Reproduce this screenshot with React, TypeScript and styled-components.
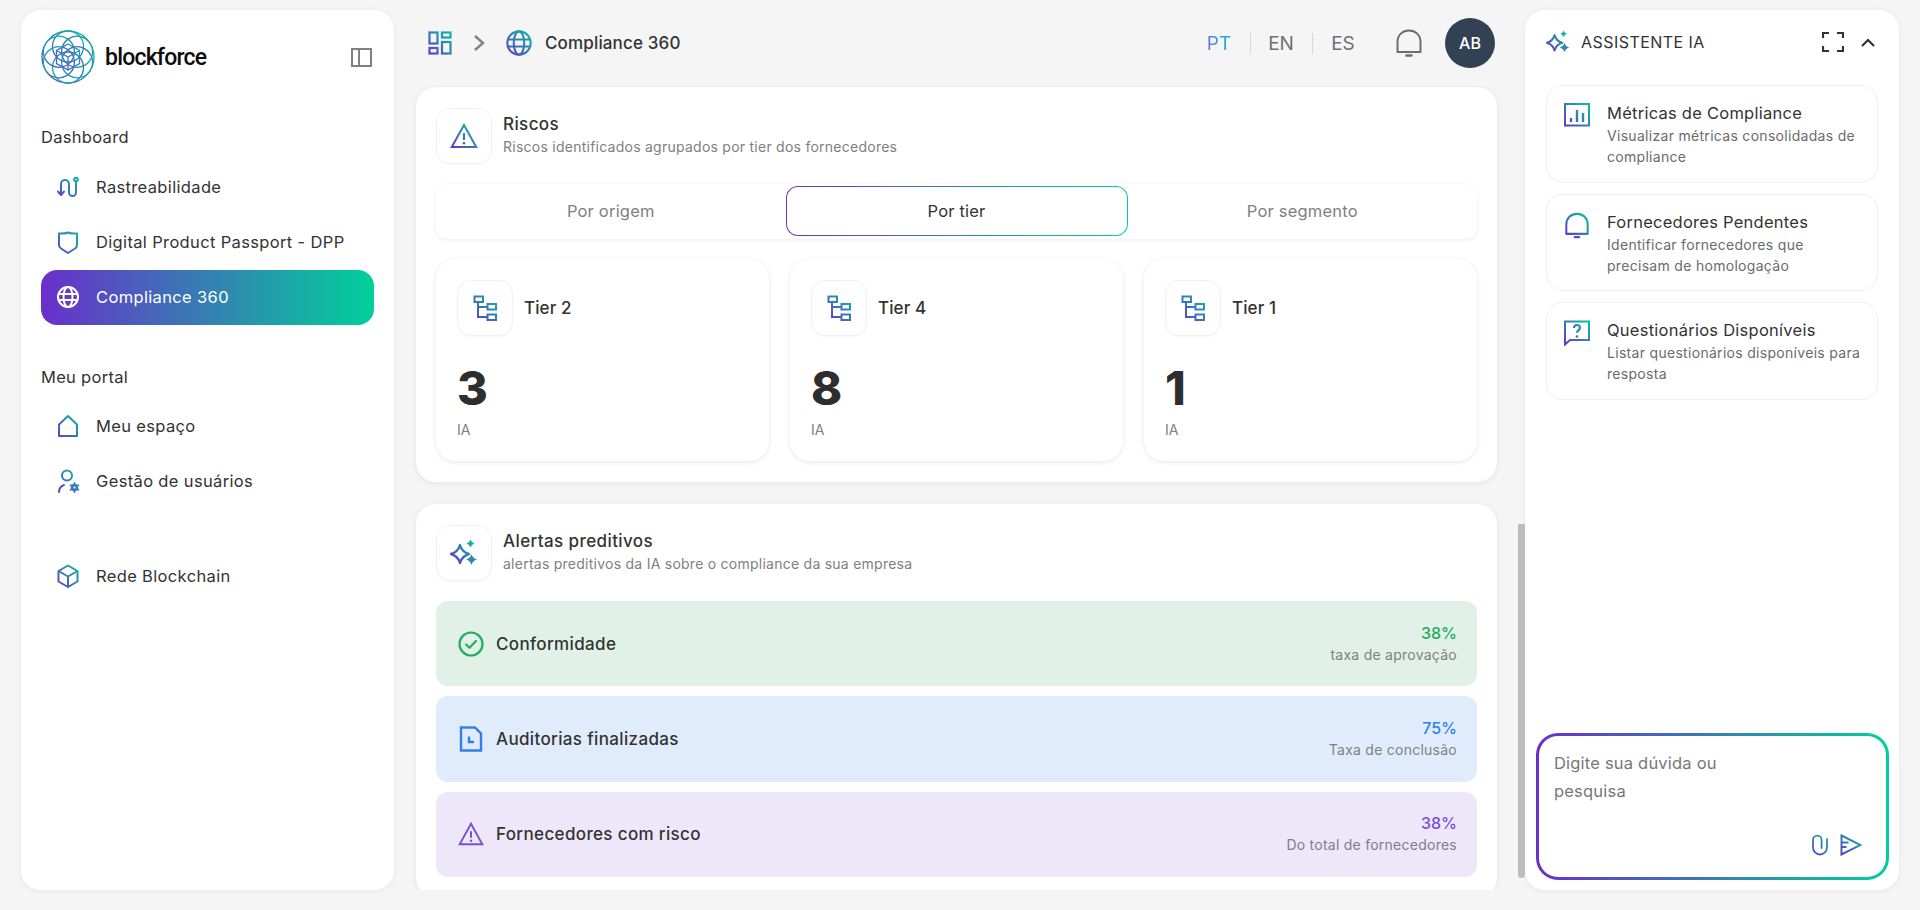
import React from "react";
import styled, { createGlobalStyle } from "styled-components";

const GRAD = "linear-gradient(90deg, #6a2fcb 0%, #00d09a 100%)";
const FONT = `"Inter", "Roboto", sans-serif`;

const Global = createGlobalStyle`
  html, body { margin: 0; padding: 0; height: 100%; background: #f5f5f5; overflow: hidden; }
  body { font-family: ${FONT}; color: #333; }
  * { box-sizing: border-box; }
`;

const Page = styled.div`
  display: grid;
  grid-template-columns: 373px 1fr 374px;
  height: 910px;
  padding: 10px 21px 20px;
`;

const Panel = styled.aside`
  background: #fff;
  border-radius: 20px;
  box-shadow: 0 1px 6px rgba(0, 0, 0, 0.06);
  display: flex;
  flex-direction: column;
  min-height: 0;
`;

/* sidebar */
const Sidebar = styled(Panel)`
  padding: 20px;
`;
const LogoRow = styled.div`
  display: flex;
  align-items: center;
  justify-content: space-between;
  padding-right: 2px;
  height: 54px;
  margin-bottom: 41px;
`;
const Brand = styled.div`
  display: flex;
  align-items: center;
  gap: 10px;
`;
const BrandName = styled.span`
  font-family: "Roboto", sans-serif;
  font-size: 23px;
  font-weight: 500;
  color: #0c0c0c;
  letter-spacing: -0.8px;
`;
const SectionLabel = styled.div<{ $gap: number }>`
  font-size: 16.5px;
  letter-spacing: 0.3px;
  line-height: 24px;
  color: #333;
  margin-bottom: ${(p) => p.$gap}px;
`;
const NavGroup = styled.nav`
  display: flex;
  flex-direction: column;
  margin-bottom: 40px;
`;
const NavItem = styled.div<{ $active?: boolean }>`
  display: flex;
  align-items: center;
  gap: 16px;
  height: 55px;
  padding: 0 0 2px 15px;
  border-radius: 16px;
  font-size: 16.5px;
  letter-spacing: 0.35px;
  color: ${(p) => (p.$active ? "#fff" : "#333")};
  background: ${(p) => (p.$active ? GRAD : "transparent")};
`;

/* main column */
const Main = styled.main`
  position: relative;
  display: flex;
  flex-direction: column;
  min-width: 0;
  min-height: 0;
`;
const Header = styled.header`
  flex: none;
  height: 66px;
  margin: 0 30px 10px 34px;
  display: flex;
  align-items: center;
`;
const Crumbs = styled.div`
  display: flex;
  align-items: center;
  font-size: 17px;
  letter-spacing: 0.15px;
  font-weight: 500;
  color: #333;
`;
const CrumbArrow = styled.span`
  display: flex;
  margin: 0 20px 0 21px;
`;
const CrumbTitle = styled.span`
  margin-left: 12px;
`;
const HeaderRight = styled.div`
  margin-left: auto;
  display: flex;
  align-items: center;
`;
const Langs = styled.div`
  display: flex;
  align-items: center;
  margin-right: 21px;
`;
const Lang = styled.span`
  font-size: 19px;
  width: 62px;
  text-align: center;
  position: relative;
  color: #6f6f78;
  & + &::before {
    content: "";
    position: absolute;
    left: 0;
    top: 1px;
    bottom: 1px;
    width: 1px;
    background: #d8d8d8;
  }
`;
const ActiveLang = styled.b`
  font-weight: 400;
  background: linear-gradient(90deg, #6a73ee, #0bb4e6);
  -webkit-background-clip: text;
  background-clip: text;
  color: transparent;
`;
const BellWrap = styled.span`
  display: flex;
  margin-right: 22px;
`;
const Avatar = styled.div`
  width: 50px;
  height: 50px;
  border-radius: 50%;
  background: #334155;
  color: #fff;
  font-size: 16px;
  font-weight: 500;
  display: flex;
  align-items: center;
  justify-content: center;
`;
const Content = styled.div`
  flex: 1;
  min-height: 0;
  overflow: hidden;
  padding: 1px 28px 0 22px;
  display: flex;
  flex-direction: column;
  gap: 22px;
`;
const ScrollThumb = styled.div`
  position: absolute;
  right: 0;
  top: 514px;
  width: 7px;
  height: 354px;
  background: #bdbdbd;
  border-radius: 0 0 4px 4px;
`;
const Card = styled.section`
  flex: none;
  background: #fff;
  border-radius: 20px;
  box-shadow: 0 1px 6px rgba(0, 0, 0, 0.08);
  padding: 21px 20px;
`;
const CardHead = styled.div`
  display: flex;
  align-items: center;
  gap: 11px;
`;
const IconBox = styled.div`
  width: 56px;
  height: 56px;
  flex: none;
  border: 1px solid #f2f2f2;
  border-radius: 14px;
  background: #fff;
  box-shadow: 0 1px 2px rgba(0, 0, 0, 0.03);
  display: flex;
  align-items: center;
  justify-content: center;
`;
const CardTitle = styled.div`
  font-size: 17px;
  letter-spacing: 0.4px;
  font-weight: 500;
  line-height: 21px;
  color: #333;
`;
const CardSub = styled.div`
  font-size: 14px;
  letter-spacing: 0.25px;
  line-height: 23px;
  color: #808080;
`;
const Tabs = styled.div`
  margin-top: 20px;
  height: 55px;
  padding: 2px 0 3px;
  display: grid;
  grid-template-columns: 1fr 342px 1fr;
  border-radius: 12px;
  background: #fff;
  box-shadow: 0 1px 5px rgba(0, 0, 0, 0.08);
`;
const Tab = styled.div<{ $active?: boolean }>`
  display: flex;
  align-items: center;
  justify-content: center;
  font-size: 16.5px;
  letter-spacing: 0.2px;
  border-radius: 12px;
  color: ${(p) => (p.$active ? "#333" : "#808080")};
  ${(p) =>
    p.$active
      ? `border: 1px solid transparent;
         background: linear-gradient(#fff, #fff) padding-box, ${GRAD} border-box;`
      : ""}
`;
const TierGrid = styled.div`
  margin-top: 20px;
  display: grid;
  grid-template-columns: repeat(3, 1fr);
  gap: 21px;
`;
const TierCard = styled.div`
  height: 202px;
  border-radius: 20px;
  background: #fff;
  box-shadow: 0 1px 5px rgba(0, 0, 0, 0.1);
  padding: 21px 21px 19px;
`;
const TierTitle = styled.span`
  font-size: 17px;
  letter-spacing: 0.1px;
  font-weight: 500;
  color: #333;
`;
const TierValue = styled.div`
  margin-top: 27px;
  font-size: 47px;
  line-height: 50px;
  font-weight: 800;
  color: #2e2e2e;
`;
const TierNote = styled.div`
  margin-top: 5px;
  font-size: 14px;
  line-height: 24px;
  color: #808080;
`;
const Alerts = styled.div`
  margin-top: 20px;
  display: flex;
  flex-direction: column;
  gap: 10px;
`;
const AlertRow = styled.div<{ $bg: string }>`
  height: 85.25px;
  border-radius: 12px;
  background: ${(p) => p.$bg};
  display: flex;
  align-items: center;
  padding: 0 20px 0 22px;
`;
const AlertLabel = styled.span`
  margin-left: 12px;
  font-size: 17px;
  letter-spacing: 0.35px;
  font-weight: 500;
  color: #333;
`;
const AlertStats = styled.div`
  margin-left: auto;
  text-align: right;
`;
const AlertValue = styled.div<{ $color: string }>`
  font-size: 16px;
  font-weight: 500;
  line-height: 22px;
  color: ${(p) => p.$color};
`;
const AlertNote = styled.div`
  font-size: 14px;
  letter-spacing: 0.25px;
  line-height: 22px;
  color: #808080;
`;

/* assistant */
const Assistant = styled(Panel)`
  padding-bottom: 10px;
`;
const AssistantHead = styled.div`
  flex: none;
  height: 64px;
  margin-bottom: 11px;
  padding: 0 24px 0 21px;
  display: flex;
  align-items: center;
`;
const AssistantTitle = styled.span`
  margin-left: 11px;
  font-size: 16px;
  letter-spacing: 0.45px;
  color: #333;
`;
const AssistantTools = styled.div`
  margin-left: auto;
  display: flex;
  align-items: center;
  gap: 17px;
`;
const Suggestions = styled.div`
  margin: 0 21px;
  display: flex;
  flex-direction: column;
  gap: 11px;
`;
const Suggestion = styled.div`
  height: 97.5px;
  border: 1px solid #f1f1f1;
  border-radius: 16px;
  padding: 15px 10px 0 17px;
  display: flex;
  gap: 17px;
`;
const SuggestionIcon = styled.span`
  flex: none;
  display: flex;
  width: 26px;
  height: 27px;
  margin-top: 2px;
`;
const SuggestionTitle = styled.div`
  font-size: 16.5px;
  letter-spacing: 0.25px;
  line-height: 24px;
  color: #333;
`;
const SuggestionText = styled.div`
  font-size: 14px;
  letter-spacing: 0.3px;
  line-height: 21px;
  color: #6b6b6b;
`;
const Composer = styled.div`
  margin: auto 10px 0 11px;
  height: 147px;
  border: 3px solid transparent;
  border-radius: 22px;
  background: linear-gradient(#fff, #fff) padding-box, ${GRAD} border-box;
  padding: 13px 24px 21px 15px;
  display: flex;
  flex-direction: column;
  justify-content: space-between;
`;
const Placeholder = styled.div`
  width: 190px;
  font-size: 16.5px;
  letter-spacing: 0.2px;
  line-height: 28px;
  color: #777;
`;
const ComposerActions = styled.div`
  display: flex;
  justify-content: flex-end;
  align-items: center;
  gap: 11px;
`;
const Defs = styled.svg`
  position: absolute;
  width: 0;
  height: 0;
`;

const B = "url(#brand)";

// four pointed star, slightly concave sides
const star = (cx: number, cy: number, r: number) => {
  const k = r * 0.22;
  return `M${cx} ${cy - r}Q${cx + k} ${cy - k} ${cx + r} ${cy}Q${cx + k} ${cy + k} ${cx} ${cy + r}Q${cx - k} ${cy + k} ${cx - r} ${cy}Q${cx - k} ${cy - k} ${cx} ${cy - r}z`;
};

type IconProps = { size?: number; color?: string };

const Route = ({ size = 24, color = B }: IconProps) => (
  <svg width={size} height={size} viewBox="0 0 24 24" fill="none" stroke={color} strokeWidth="2" strokeLinecap="round" strokeLinejoin="round">
    <path d="M5 19.500V9a4 4 0 0 1 8 0v8.500a3.500 3.500 0 0 0 7 0V7" />
    <path d="M2 16.500l3 3.500 3-3.500" />
    <circle cx="20" cy="4.500" r="1.800" />
  </svg>
);
const Shield = ({ size = 24, color = B }: IconProps) => (
  <svg width={size} height={size} viewBox="0 0 24 24" fill="none" stroke={color} strokeWidth="2" strokeLinejoin="round">
    <path d="M3 3.500c3.200.3 6 .2 9-1 3 1.200 5.800 1.300 9 1V15c0 1.500-.7 2.700-2 3.500L12 23l-7-4.500C3.700 17.700 3 16.500 3 15z" />
  </svg>
);
const Globe = ({ size = 24, color = B, w = 2 }: IconProps & { w?: number }) => (
  <svg width={size} height={size} viewBox="0 0 24 24" fill="none" stroke={color} strokeWidth={w}>
    <circle cx="12" cy="12" r="10" />
    <ellipse cx="12" cy="12" rx="4.500" ry="10" />
    <path d="M2.500 9h19M2.500 15h19" />
  </svg>
);
const Home = ({ size = 24, color = B }: IconProps) => (
  <svg width={size} height={size} viewBox="0 0 24 24" fill="none" stroke={color} strokeWidth="2" strokeLinejoin="round">
    <path d="M3 22V10.500L12 2l9 8.500V22z" />
  </svg>
);
const UserGear = ({ size = 24, color = B }: IconProps) => (
  <svg width={size} height={size} viewBox="0 0 24 24" fill="none" stroke={color} strokeWidth="2" strokeLinecap="round">
    <circle cx="11" cy="6.500" r="5" />
    <path d="M3 23c0-3.500 2-6 5-7" />
    <circle cx="18.500" cy="18.500" r="2.400" strokeWidth="2.600" />
    <path d="M18.500 14v1M18.500 22v1M14.600 16.200l.9.500M21.500 20.300l.9.500M14.600 20.800l.9-.5M21.500 16.700l.9-.5" strokeWidth="1.800" />
  </svg>
);
const Cube = ({ size = 24, color = B }: IconProps) => (
  <svg width={size} height={size} viewBox="0 0 24 24" fill="none" stroke={color} strokeWidth="2" strokeLinejoin="round">
    <path d="M12 1.500l9.500 5.500v10.500L12 23l-9.500-5.500V7z" />
    <path d="M2.500 7L12 12.500 21.500 7M12 12.500V23" />
  </svg>
);
const Grid = () => (
  <svg width="24" height="24" viewBox="0 0 24 24" fill="none" stroke={B} strokeWidth="2.200">
    <rect x="1.500" y="1.500" width="8" height="11" />
    <rect x="14" y="1.500" width="8.500" height="5" />
    <rect x="14" y="11" width="8.500" height="11.500" />
    <rect x="1.500" y="17" width="8" height="5.500" />
  </svg>
);
const Warn = ({ size = 28, color = B }: IconProps) => (
  <svg width={size} height={size} viewBox="0 0 28 28" fill="none" stroke={color} strokeWidth="2">
    <path d="M14 3L1.800 25h24.400z" strokeLinejoin="miter" />
    <path d="M14 11v7" strokeWidth="2.200" />
    <circle cx="14" cy="21.300" r="1.300" fill={color} stroke="none" />
  </svg>
);
const Tree = () => (
  <svg width="24" height="27" viewBox="0 0 24 27" fill="none" stroke={B} strokeWidth="2">
    <rect x="1.500" y="1.500" width="8.500" height="5.500" />
    <rect x="14.500" y="9" width="8.500" height="5.500" />
    <rect x="14.500" y="19.500" width="8.500" height="5.500" />
    <path d="M5 7v15h9.500M5 12h9.500" />
  </svg>
);
const Sparkle = ({ size = 28 }: IconProps) => (
  <svg width={size} height={size} viewBox="0 0 28 28" fill="none">
    <path d={star(10, 15, 9)} stroke={B} strokeWidth="2.400" strokeLinejoin="round" />
    <path d={star(20.500, 4.500, 4)} fill="#12b3a0" />
    <path d={star(21.500, 20.500, 5.500)} fill="#2f8aae" />
  </svg>
);
const Check = () => (
  <svg width="26" height="26" viewBox="0 0 26 26" fill="none" stroke="#22ad5c" strokeWidth="2.200" strokeLinecap="round" strokeLinejoin="round">
    <circle cx="13" cy="13" r="11.500" />
    <path d="M8 13.500l3.500 3.200L18 10" />
  </svg>
);
const DocClock = () => (
  <svg width="26" height="26" viewBox="0 0 26 26" fill="none" stroke="#2f80ed" strokeWidth="2.400">
    <path d="M3 1.500h14l6 6V24.500H3z" strokeLinejoin="miter" />
    <path d="M11 10.500V16h5" />
  </svg>
);
const Bell = ({ size = 28, color = "#6d6d6d", w = 2 }: IconProps & { w?: number }) => (
  <svg width={size} height={size} viewBox="0 0 28 28" fill="none" stroke={color} strokeWidth={w}>
    <path d="M2.500 23h23V13c0-7-5-11.500-11.500-11.500S2.500 6 2.500 13z" strokeLinejoin="round" />
    <path d="M11.500 26.500h5" strokeLinecap="round" strokeWidth="2.400" />
  </svg>
);
const Bars = () => (
  <svg width="26" height="24" viewBox="0 0 26 24" fill="none" stroke={B} strokeWidth="2">
    <rect x="1" y="1" width="24" height="21.500" />
    <path d="M7 19v-4M13 19V7M19 19V10" strokeWidth="2.400" />
  </svg>
);
const QuestionChat = () => (
  <svg width="26" height="26" viewBox="0 0 26 26" fill="none" stroke={B} strokeWidth="2">
    <path d="M1 1.500h24V20H6l-5 4.500z" />
    <path d="M10 8c0-1.800 1.300-3 3-3s3 1.100 3 2.800c0 2.400-3 2.400-3 5" strokeWidth="2.200" />
    <circle cx="13" cy="16.500" r="1.300" fill={B} stroke="none" />
  </svg>
);
const Clip = () => (
  <svg width="18" height="22" viewBox="0 0 18 22" fill="none" stroke={B} strokeWidth="1.800" strokeLinecap="round">
    <path d="M16 5v8.500a7 7 0 0 1-14 0V6a4.300 4.300 0 0 1 8.600 0v8" />
  </svg>
);
const Send = () => (
  <svg width="22" height="22" viewBox="0 0 22 22" fill="none" stroke={B} strokeWidth="2">
    <path d="M1.500 1.500L20.500 11 1.500 20.500z" strokeLinejoin="miter" />
    <path d="M1.500 8.500h7M1.500 13h5" />
  </svg>
);
const Corners = () => (
  <svg width="22" height="20" viewBox="0 0 22 20" fill="none" stroke="#333" strokeWidth="2.200">
    <path d="M1 6V1h6M15 1h6v5M21 14v5h-6M7 19H1v-5" />
  </svg>
);
const Up = () => (
  <svg width="14" height="9" viewBox="0 0 14 9" fill="none" stroke="#333" strokeWidth="2.200">
    <path d="M1 8l6-6 6 6" />
  </svg>
);
const Chevron = () => (
  <svg width="12" height="16" viewBox="0 0 12 16" fill="none" stroke="#808080" strokeWidth="2.400">
    <path d="M2 1l8 7-8 7" />
  </svg>
);
const Collapse = () => (
  <svg width="21" height="19" viewBox="0 0 21 19" fill="none" stroke="#808080" strokeWidth="2">
    <rect x="1" y="1" width="19" height="17" />
    <path d="M8 1v17" />
  </svg>
);
const Logo = () => (
  <svg width="54" height="54" viewBox="0 0 54 54" fill="none" stroke="url(#brandLogo)" strokeWidth="1.300">
    <circle cx="27" cy="27" r="26" />
    {[0, 60, 120, 180, 240, 300].map((a) => (
      <circle key={a} cx="27" cy="16.500" r="15.500" transform={`rotate(${a} 27 27)`} />
    ))}
    <path d="M27 14l11.500 6.500v13L27 40l-11.500-6.500v-13z" />
    <path d="M15.500 20.500L27 27l11.500-6.500M27 27v13" />
  </svg>
);

const tiers = [
  { name: "Tier 2", value: "3" },
  { name: "Tier 4", value: "8" },
  { name: "Tier 1", value: "1" },
];

const alerts = [
  { label: "Conformidade", value: "38%", note: "taxa de aprovação", bg: "#e1f1e7", color: "#22ad5c", icon: <Check /> },
  { label: "Auditorias finalizadas", value: "75%", note: "Taxa de conclusão", bg: "#e0ecfb", color: "#2f80ed", icon: <DocClock /> },
  { label: "Fornecedores com risco", value: "38%", note: "Do total de fornecedores", bg: "#eee6f9", color: "#7a4fd6", icon: <Warn size={26} color="#7a4fd6" /> },
];

const suggestions = [
  { title: "Métricas de Compliance", text: "Visualizar métricas consolidadas de compliance", icon: <Bars /> },
  { title: "Fornecedores Pendentes", text: "Identificar fornecedores que precisam de homologação", icon: <Bell size={27} color={B} w={2.2} /> },
  { title: "Questionários Disponíveis", text: "Listar questionários disponíveis para resposta", icon: <QuestionChat /> },
];

export default function App() {
  return (
    <>
      <Global />
      <Defs aria-hidden="true">
        <defs>
          <linearGradient id="brand" gradientUnits="userSpaceOnUse" x1="0" y1="26" x2="26" y2="0">
            <stop offset="0" stopColor="#6a2fcb" />
            <stop offset="1" stopColor="#00c9a0" />
          </linearGradient>
          <linearGradient id="brandLogo" gradientUnits="userSpaceOnUse" x1="4" y1="50" x2="50" y2="4">
            <stop offset="0" stopColor="#6a2fcb" />
            <stop offset="1" stopColor="#00c9a0" />
          </linearGradient>
        </defs>
      </Defs>
      <Page>
        <Sidebar>
          <LogoRow>
            <Brand>
              <Logo />
              <BrandName>blockforce</BrandName>
            </Brand>
            <Collapse />
          </LogoRow>
          <SectionLabel $gap={11}>Dashboard</SectionLabel>
          <NavGroup>
            <NavItem><Route />Rastreabilidade</NavItem>
            <NavItem><Shield />Digital Product Passport - DPP</NavItem>
            <NavItem $active><Globe color="#fff" />Compliance 360</NavItem>
          </NavGroup>
          <SectionLabel $gap={10}>Meu portal</SectionLabel>
          <NavGroup>
            <NavItem><Home />Meu espaço</NavItem>
            <NavItem><UserGear />Gestão de usuários</NavItem>
          </NavGroup>
          <NavGroup>
            <NavItem><Cube />Rede Blockchain</NavItem>
          </NavGroup>
        </Sidebar>

        <Main>
          <Header>
            <Crumbs>
              <Grid />
              <CrumbArrow><Chevron /></CrumbArrow>
              <Globe size={28} w={1.8} />
              <CrumbTitle>Compliance 360</CrumbTitle>
            </Crumbs>
            <HeaderRight>
              <Langs>
                <Lang><ActiveLang>PT</ActiveLang></Lang>
                <Lang>EN</Lang>
                <Lang>ES</Lang>
              </Langs>
              <BellWrap><Bell /></BellWrap>
              <Avatar>AB</Avatar>
            </HeaderRight>
          </Header>
          <Content>
            <Card>
              <CardHead>
                <IconBox><Warn /></IconBox>
                <div>
                  <CardTitle>Riscos</CardTitle>
                  <CardSub>Riscos identificados agrupados por tier dos fornecedores</CardSub>
                </div>
              </CardHead>
              <Tabs>
                <Tab>Por origem</Tab>
                <Tab $active>Por tier</Tab>
                <Tab>Por segmento</Tab>
              </Tabs>
              <TierGrid>
                {tiers.map((t) => (
                  <TierCard key={t.name}>
                    <CardHead>
                      <IconBox><Tree /></IconBox>
                      <TierTitle>{t.name}</TierTitle>
                    </CardHead>
                    <TierValue>{t.value}</TierValue>
                    <TierNote>IA</TierNote>
                  </TierCard>
                ))}
              </TierGrid>
            </Card>
            <Card>
              <CardHead>
                <IconBox><Sparkle /></IconBox>
                <div>
                  <CardTitle>Alertas preditivos</CardTitle>
                  <CardSub>alertas preditivos da IA sobre o compliance da sua empresa</CardSub>
                </div>
              </CardHead>
              <Alerts>
                {alerts.map((a) => (
                  <AlertRow key={a.label} $bg={a.bg}>
                    {a.icon}
                    <AlertLabel>{a.label}</AlertLabel>
                    <AlertStats>
                      <AlertValue $color={a.color}>{a.value}</AlertValue>
                      <AlertNote>{a.note}</AlertNote>
                    </AlertStats>
                  </AlertRow>
                ))}
              </Alerts>
            </Card>
          </Content>
          <ScrollThumb />
        </Main>

        <Assistant>
          <AssistantHead>
            <Sparkle size={24} />
            <AssistantTitle>ASSISTENTE IA</AssistantTitle>
            <AssistantTools>
              <Corners />
              <Up />
            </AssistantTools>
          </AssistantHead>
          <Suggestions>
            {suggestions.map((s) => (
              <Suggestion key={s.title}>
                <SuggestionIcon>{s.icon}</SuggestionIcon>
                <div>
                  <SuggestionTitle>{s.title}</SuggestionTitle>
                  <SuggestionText>{s.text}</SuggestionText>
                </div>
              </Suggestion>
            ))}
          </Suggestions>
          <Composer>
            <Placeholder>Digite sua dúvida ou pesquisa</Placeholder>
            <ComposerActions>
              <Clip />
              <Send />
            </ComposerActions>
          </Composer>
        </Assistant>
      </Page>
    </>
  );
}
